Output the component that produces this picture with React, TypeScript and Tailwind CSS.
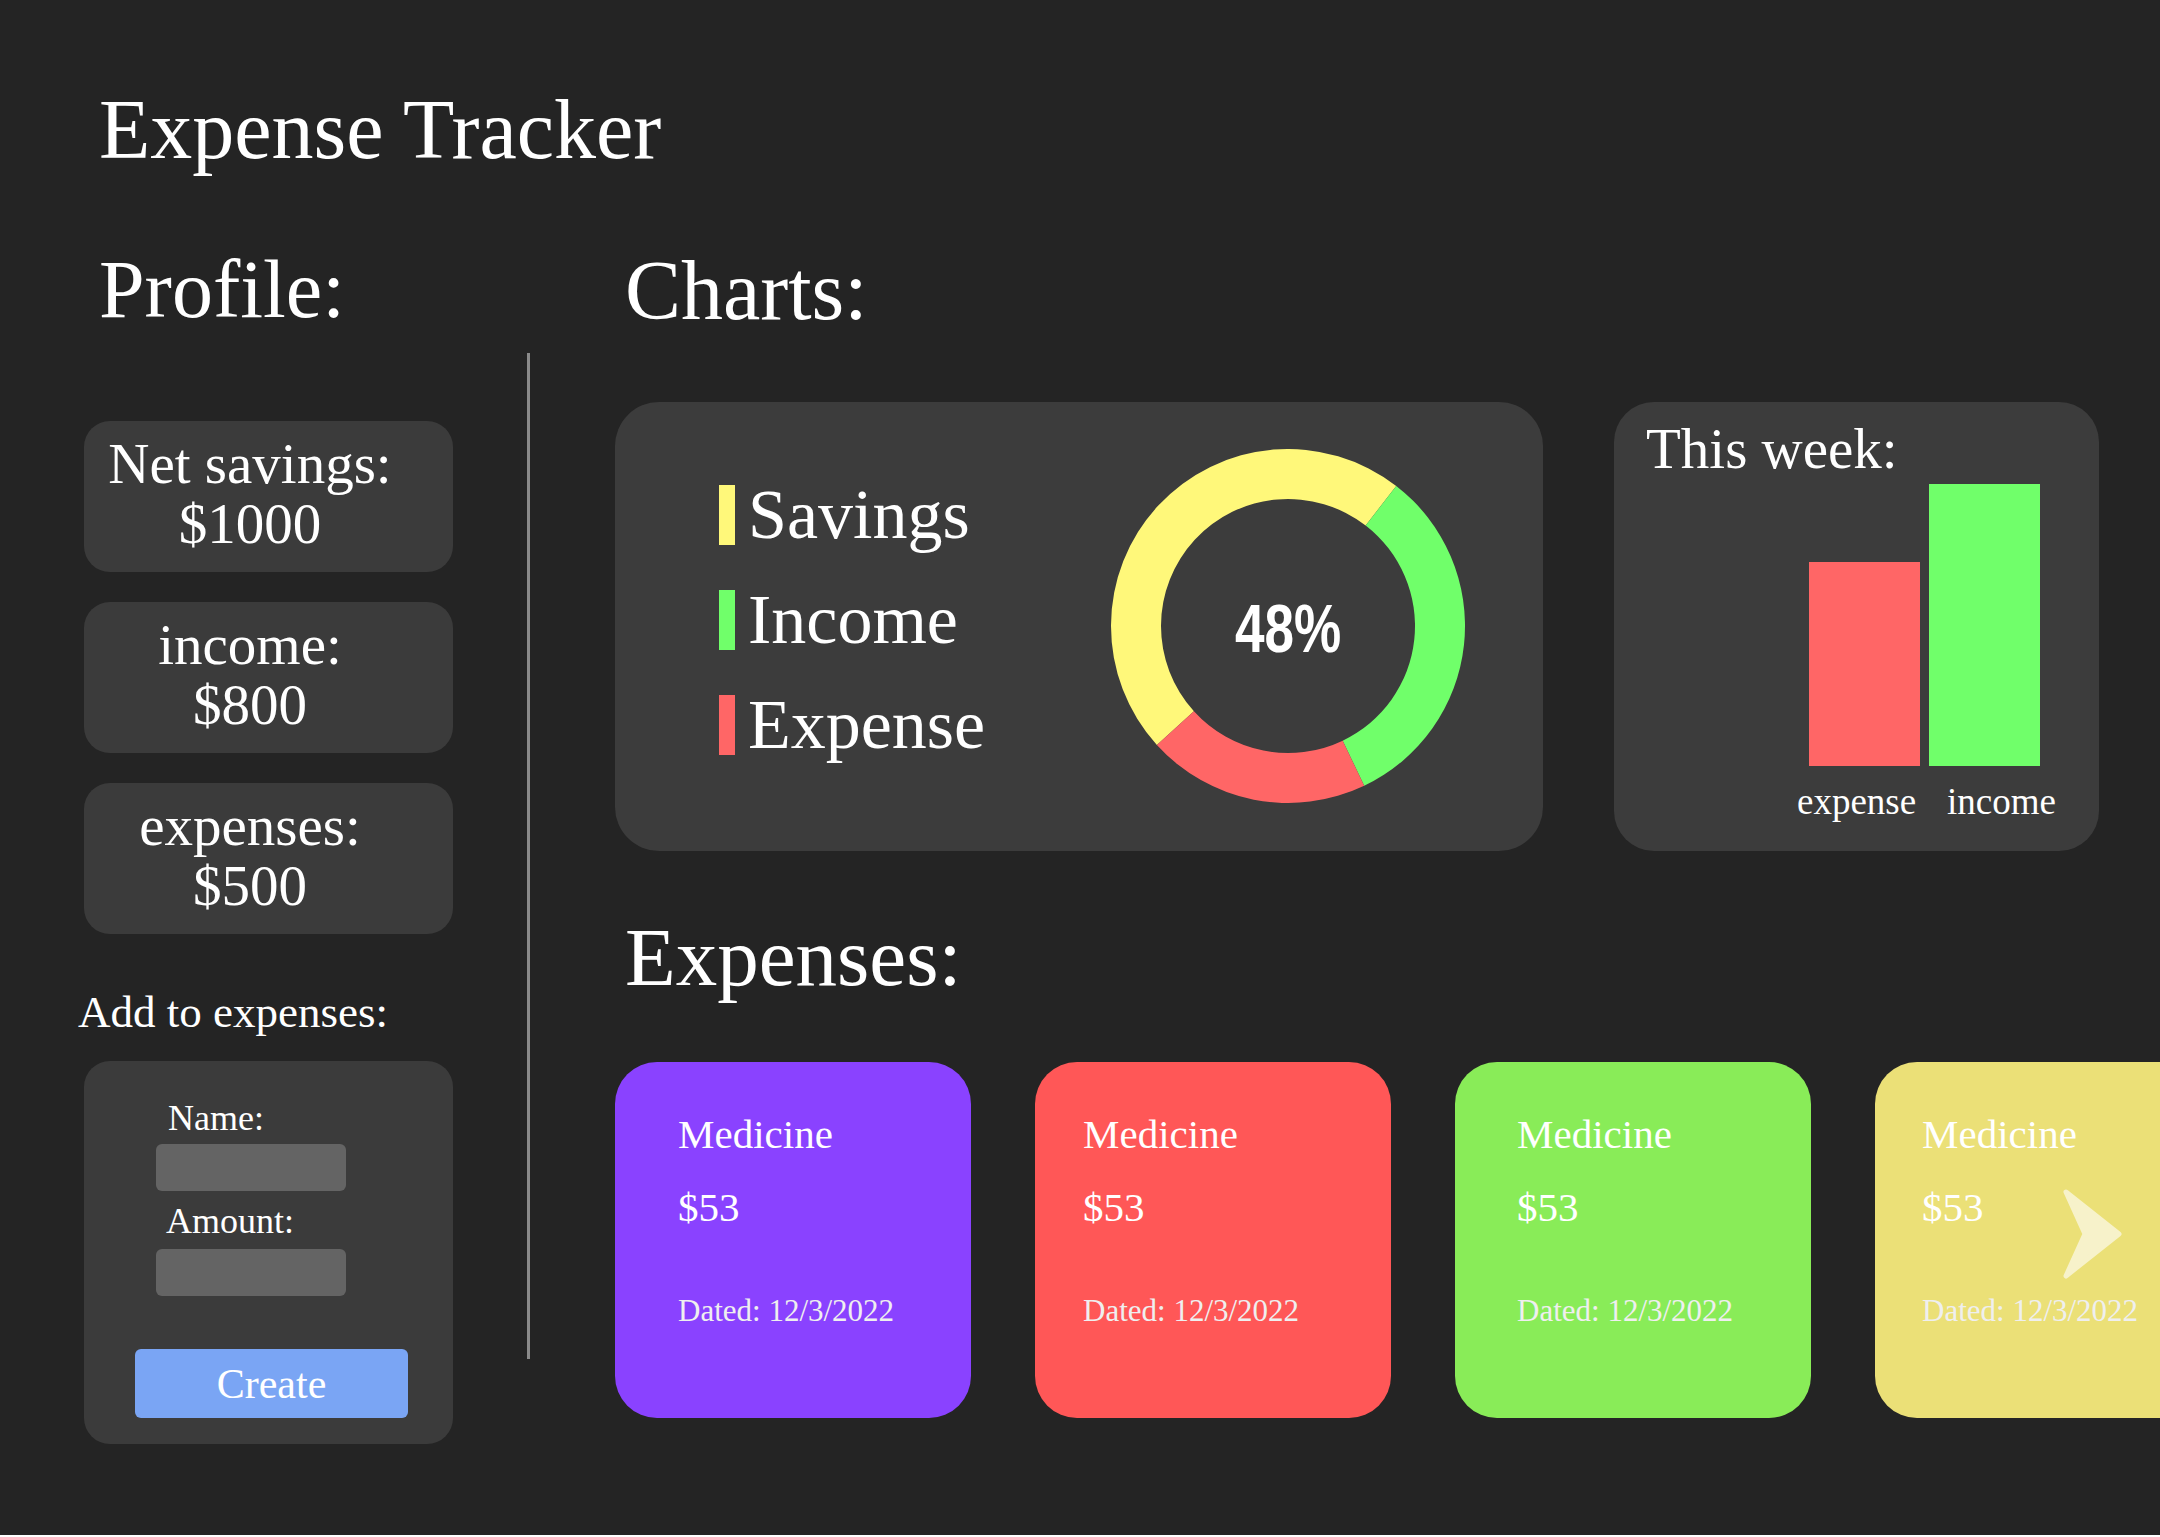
import React from 'react';

const polar = (r: number, deg: number) => {
  const a = (deg * Math.PI) / 180;
  return [177 + r * Math.sin(a), 177 - r * Math.cos(a)];
};

// ring slice, angles measured clockwise from 12 o'clock
const slice = (a1: number, a2: number) => {
  const [x1, y1] = polar(177, a1);
  const [x2, y2] = polar(177, a2);
  const [x3, y3] = polar(127, a2);
  const [x4, y4] = polar(127, a1);
  const large = a2 - a1 > 180 ? 1 : 0;
  return `M${x1} ${y1} A177 177 0 ${large} 1 ${x2} ${y2} L${x3} ${y3} A127 127 0 ${large} 0 ${x4} ${y4} Z`;
};

const legend = [
  { label: 'Savings', color: 'bg-[#fff87a]' },
  { label: 'Income', color: 'bg-[#70ff6a]' },
  { label: 'Expense', color: 'bg-[#ff6666]' },
];

const stats = [
  { label: 'Net savings:', value: '$1000' },
  { label: 'income:', value: '$800' },
  { label: 'expenses:', value: '$500' },
];

const expenses = [
  { bg: 'bg-[#8a42ff]', pad: 'pl-[63px]' },
  { bg: 'bg-[#ff5757]', pad: 'pl-[48px]' },
  { bg: 'bg-[#89ec58]', pad: 'pl-[62px]' },
  { bg: 'bg-[#ebe077]', pad: 'pl-[47px]', more: true },
];

const App = () => {
  return (
    <div className="w-full h-[1535px] bg-[#242424] overflow-hidden text-white font-['Liberation_Serif',serif]">
      {/* Title */}
      <h1 className="pt-[88px] pl-[99px] text-[84px] leading-none font-normal">Expense Tracker</h1>

      <div className="flex">
        {/* Profile column */}
        <div className="w-[453px] pl-[84px] shrink-0 flex flex-col">
          <h2 className="mt-[77px] ml-[15px] text-[82px] leading-none">Profile:</h2>

          <div className="mt-[90px] flex flex-col gap-[30px]">
            {stats.map((s) => (
              <div key={s.label} className="h-[151px] rounded-[26px] bg-[#3b3b3b] pt-[13px] pr-[37px] text-center text-[57px] leading-[60px]">
                <div>{s.label}</div>
                <div>{s.value}</div>
              </div>
            ))}
          </div>

          <div className="mt-[56px] -ml-[6px] text-[45px] leading-none whitespace-nowrap">Add to expenses:</div>

          <div className="mt-[26px] h-[383px] rounded-[26px] bg-[#3b3b3b] flex flex-col">
            <div className="pl-[72px] pt-[39px] flex flex-col text-[36px] leading-none">
              <label className="ml-[12px]">Name:</label>
              <div className="mt-[8px] w-[190px] h-[47px] rounded-[6px] bg-[#646464]" />
              <label className="mt-[12px] ml-[10px]">Amount:</label>
              <div className="mt-[10px] w-[190px] h-[47px] rounded-[6px] bg-[#646464]" />
            </div>
            <button className="mt-[53px] ml-[51px] w-[273px] h-[69px] rounded-[6px] bg-[#7aa5f4] text-[42px] leading-none text-white">
              Create
            </button>
          </div>
        </div>

        {/* Divider */}
        <div className="ml-[74px] mt-[181px] w-[3px] h-[1006px] bg-[#8a8a8a] shrink-0" />

        {/* Main column */}
        <div className="ml-[85px] flex-1 min-w-0 flex flex-col">
          <h2 className="mt-[77px] ml-[10px] text-[84px] leading-none">Charts:</h2>

          <div className="mt-[69px] flex gap-[71px]">
            {/* Donut card */}
            <div className="w-[928px] h-[449px] rounded-[44px] bg-[#3c3c3c] flex pl-[104px] shrink-0">
              <div className="w-[392px] pt-[78px] flex flex-col gap-[35px] shrink-0">
                {legend.map((l) => (
                  <div key={l.label} className="flex items-center gap-[13px]">
                    <div className={`w-[16px] h-[60px] ${l.color}`} />
                    <span className="text-[70px] leading-none">{l.label}</span>
                  </div>
                ))}
              </div>
              <div className="relative mt-[47px] w-[354px] h-[354px] shrink-0">
                <svg width="354" height="354" viewBox="0 0 354 354">
                  <path d={slice(-132.2, 37.7)} fill="#fff87a" />
                  <path d={slice(37.7, 154.5)} fill="#70ff6a" />
                  <path d={slice(154.5, 227.8)} fill="#ff6666" />
                </svg>
                <div className="absolute inset-0 flex items-center justify-center pt-[4px]">
                  <span className="font-['Liberation_Sans',sans-serif] font-black text-[68px] leading-none scale-x-[0.78]">48%</span>
                </div>
              </div>
            </div>

            {/* Weekly bars */}
            <div className="w-[485px] h-[449px] rounded-[40px] bg-[#3c3c3c] shrink-0 flex flex-col">
              <div className="mt-[18px] ml-[32px] text-[57px] leading-none">This week:</div>
              <div className="mt-[7px] ml-[195px] h-[282px] flex items-end gap-[9px]">
                <div className="w-[111px] h-[204px] bg-[#ff6666]" />
                <div className="w-[111px] h-[282px] bg-[#70ff6a]" />
              </div>
              <div className="mt-[17px] ml-[183px] flex text-[37px] leading-none">
                <span className="w-[150px]">expense</span>
                <span>income</span>
              </div>
            </div>
          </div>

          <h2 className="mt-[65px] ml-[10px] text-[83px] leading-none">Expenses:</h2>

          <div className="mt-[63px] flex gap-[64px]">
            {expenses.map((e, i) => (
              <div key={i} className={`relative w-[356px] h-[356px] shrink-0 rounded-[42px] ${e.bg} ${e.pad} flex flex-col`}>
                <div className="mt-[52px] text-[41px] leading-none">Medicine</div>
                <div className="mt-[32px] text-[41px] leading-none">$53</div>
                <div className="mt-[67px] text-[31px] leading-none text-[#efefef] whitespace-nowrap">Dated: 12/3/2022</div>
                {e.more && (
                  <svg className="absolute left-[188px] top-[127px]" width="60" height="90" viewBox="0 0 60 90">
                    <polygon
                      points="3,3 56,45 3,87 22,45"
                      fill="#f7f2ca"
                      stroke="#f7f2ca"
                      strokeWidth="5"
                      strokeLinejoin="round"
                    />
                  </svg>
                )}
              </div>
            ))}
          </div>
        </div>
      </div>
    </div>
  );
};

export default App;
